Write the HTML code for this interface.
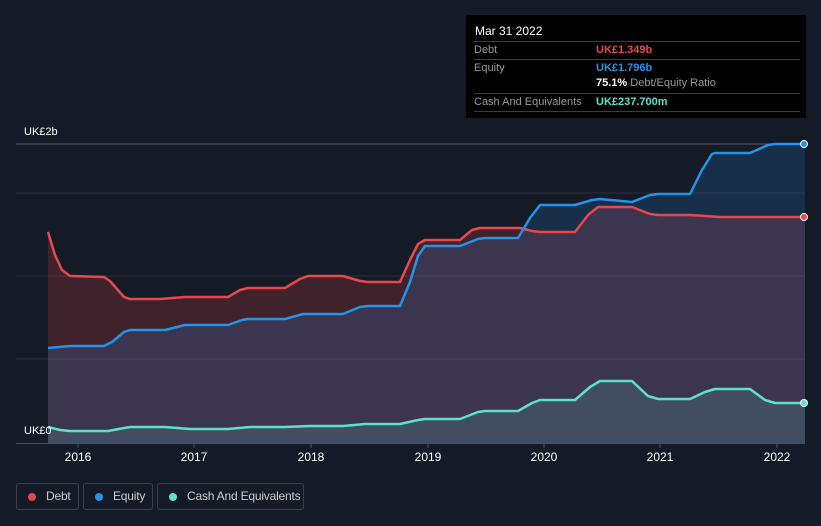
<!DOCTYPE html>
<html><head><style>
html,body{margin:0;width:821px;height:526px;overflow:hidden}
body{background:#151b26;font-family:"Liberation Sans",sans-serif;position:relative}
.t{position:absolute;color:#fff;font-size:12px}
.tip{position:absolute;left:466px;top:15px;width:340px;height:103px;background:#000}
.row{position:absolute;left:8px;width:326px;height:18px;border-top:1px solid #3a3d44;font-size:11px;color:#999}
.lg{position:absolute;top:483px;height:27px;border:1px solid #3a3f4a;border-radius:3px;font-size:12px;color:#ccc;line-height:25px;box-sizing:border-box;white-space:nowrap;letter-spacing:-0.2px}
.dot{display:inline-block;width:8px;height:8px;border-radius:50%;margin:0 10px 0 11px;vertical-align:-0.5px}
</style></head><body>
<svg width="821" height="526" style="position:absolute;left:0;top:0">
<g stroke="#2a303b" stroke-width="1">
<line x1="16" y1="144" x2="805" y2="144" stroke="#555a63"/>
<line x1="16" y1="193" x2="805" y2="193"/><line x1="16" y1="276" x2="805" y2="276"/><line x1="16" y1="359" x2="805" y2="359"/>
</g>
<path d="M48,232 L55,255 L62,270 L70,276 L104,277 L110,281 L124,297 L130,299 L160,299 L185,297 L228,297 L240,290 L248,288 L285,288 L300,279 L308,276 L343,276 L360,281 L368,282 L400,282 L410,260 L418,244 L425,240 L460,240 L472,230 L480,228 L520,228 L532,231 L540,232 L575,232 L588,215 L598,207 L632,207 L650,214 L658,215 L690,215 L720,217 L770,217 L805,217 L805,443 L48,443Z" fill="rgba(220,60,70,0.22)"/>
<path d="M48,348 L70,346 L104,346 L112,342 L124,332 L130,330 L165,330 L185,325 L228,325 L242,320 L248,319 L285,319 L303,314 L343,314 L360,307 L368,306 L400,306 L410,282 L418,256 L425,246 L460,246 L478,239 L485,238 L518,238 L530,218 L540,205 L575,205 L592,200 L600,199 L632,202 L650,195 L658,194 L690,194 L702,170 L712,154 L715,153 L750,153 L768,145 L775,144 L805,144 L805,443 L48,443Z" fill="rgba(40,130,220,0.2)"/>
<path d="M48,427 L60,430 L70,431 L108,431 L124,428 L130,427 L165,427 L190,429 L228,429 L250,427 L285,427 L310,426 L343,426 L365,424 L400,424 L418,420 L425,419 L460,419 L478,412 L485,411 L518,411 L532,403 L540,400 L575,400 L590,387 L600,381 L632,381 L648,396 L658,399 L690,399 L705,392 L715,389 L750,389 L765,400 L775,403 L805,403 L805,443 L48,443Z" fill="rgba(100,220,200,0.15)"/>
<g fill="none" stroke-width="2.5" stroke-linejoin="round">
<path stroke="#e8484d" d="M48,232 L55,255 L62,270 L70,276 L104,277 L110,281 L124,297 L130,299 L160,299 L185,297 L228,297 L240,290 L248,288 L285,288 L300,279 L308,276 L343,276 L360,281 L368,282 L400,282 L410,260 L418,244 L425,240 L460,240 L472,230 L480,228 L520,228 L532,231 L540,232 L575,232 L588,215 L598,207 L632,207 L650,214 L658,215 L690,215 L720,217 L770,217 L805,217"/>
<path stroke="#2394e8" d="M48,348 L70,346 L104,346 L112,342 L124,332 L130,330 L165,330 L185,325 L228,325 L242,320 L248,319 L285,319 L303,314 L343,314 L360,307 L368,306 L400,306 L410,282 L418,256 L425,246 L460,246 L478,239 L485,238 L518,238 L530,218 L540,205 L575,205 L592,200 L600,199 L632,202 L650,195 L658,194 L690,194 L702,170 L712,154 L715,153 L750,153 L768,145 L775,144 L805,144"/>
<path stroke="#5fe0cc" d="M48,427 L60,430 L70,431 L108,431 L124,428 L130,427 L165,427 L190,429 L228,429 L250,427 L285,427 L310,426 L343,426 L365,424 L400,424 L418,420 L425,419 L460,419 L478,412 L485,411 L518,411 L532,403 L540,400 L575,400 L590,387 L600,381 L632,381 L648,396 L658,399 L690,399 L705,392 L715,389 L750,389 L765,400 L775,403 L805,403"/>
</g>
<circle cx="804" cy="217" r="3.5" fill="#e8484d" stroke="#fff" stroke-width="1"/>
<circle cx="804" cy="144" r="3.5" fill="#2394e8" stroke="#fff" stroke-width="1"/>
<circle cx="804" cy="403" r="3.5" fill="#5fe0cc" stroke="#fff" stroke-width="1"/>
<line x1="16" y1="443.5" x2="805" y2="443.5" stroke="#4a4f58"/>
<g stroke="#4a4f58"><line x1="78" y1="443" x2="78" y2="448"/><line x1="194" y1="443" x2="194" y2="448"/><line x1="311" y1="443" x2="311" y2="448"/><line x1="428" y1="443" x2="428" y2="448"/><line x1="544" y1="443" x2="544" y2="448"/><line x1="660" y1="443" x2="660" y2="448"/><line x1="777" y1="443" x2="777" y2="448"/></g>
<g fill="#fff" font-size="12" text-anchor="middle" font-family="Liberation Sans,sans-serif">
<text x="78" y="461">2016</text><text x="194" y="461">2017</text><text x="311" y="461">2018</text><text x="428" y="461">2019</text><text x="544" y="461">2020</text><text x="660" y="461">2021</text><text x="777" y="461">2022</text>
</g>
</svg>
<div class="t" style="left:24px;top:126px;font-size:11px">UK£2b</div>
<div class="t" style="left:24px;top:425px;font-size:11px">UK£0</div>
<div class="tip">
<div style="position:absolute;left:9px;top:9px;color:#fff;font-size:12px">Mar 31 2022</div>
<div class="row" style="top:26px"><span style="position:absolute;left:0;top:2px">Debt</span><span style="position:absolute;left:122px;top:2px;color:#e8484d;font-weight:bold">UK£1.349b</span></div>
<div class="row" style="top:44px"><span style="position:absolute;left:0;top:2px">Equity</span><span style="position:absolute;left:122px;top:2px;color:#2394e8;font-weight:bold">UK£1.796b</span></div>
<div class="row" style="top:61px;border-top:none"><span style="position:absolute;left:122px;top:1px;color:#999"><b style="color:#fff">75.1%</b> Debt/Equity Ratio</span></div>
<div class="row" style="top:78px;height:17px;border-bottom:1px solid #3a3d44"><span style="position:absolute;left:0;top:2px">Cash And Equivalents</span><span style="position:absolute;left:122px;top:2px;color:#5fe0cc;font-weight:bold">UK£237.700m</span></div>
</div>
<div class="lg" style="left:16px;width:63px"><span class="dot" style="background:#e8484d"></span>Debt</div>
<div class="lg" style="left:83px;width:70px"><span class="dot" style="background:#2394e8"></span>Equity</div>
<div class="lg" style="left:157px;width:147px"><span class="dot" style="background:#5fe0cc"></span>Cash And Equivalents</div>
</body></html>
